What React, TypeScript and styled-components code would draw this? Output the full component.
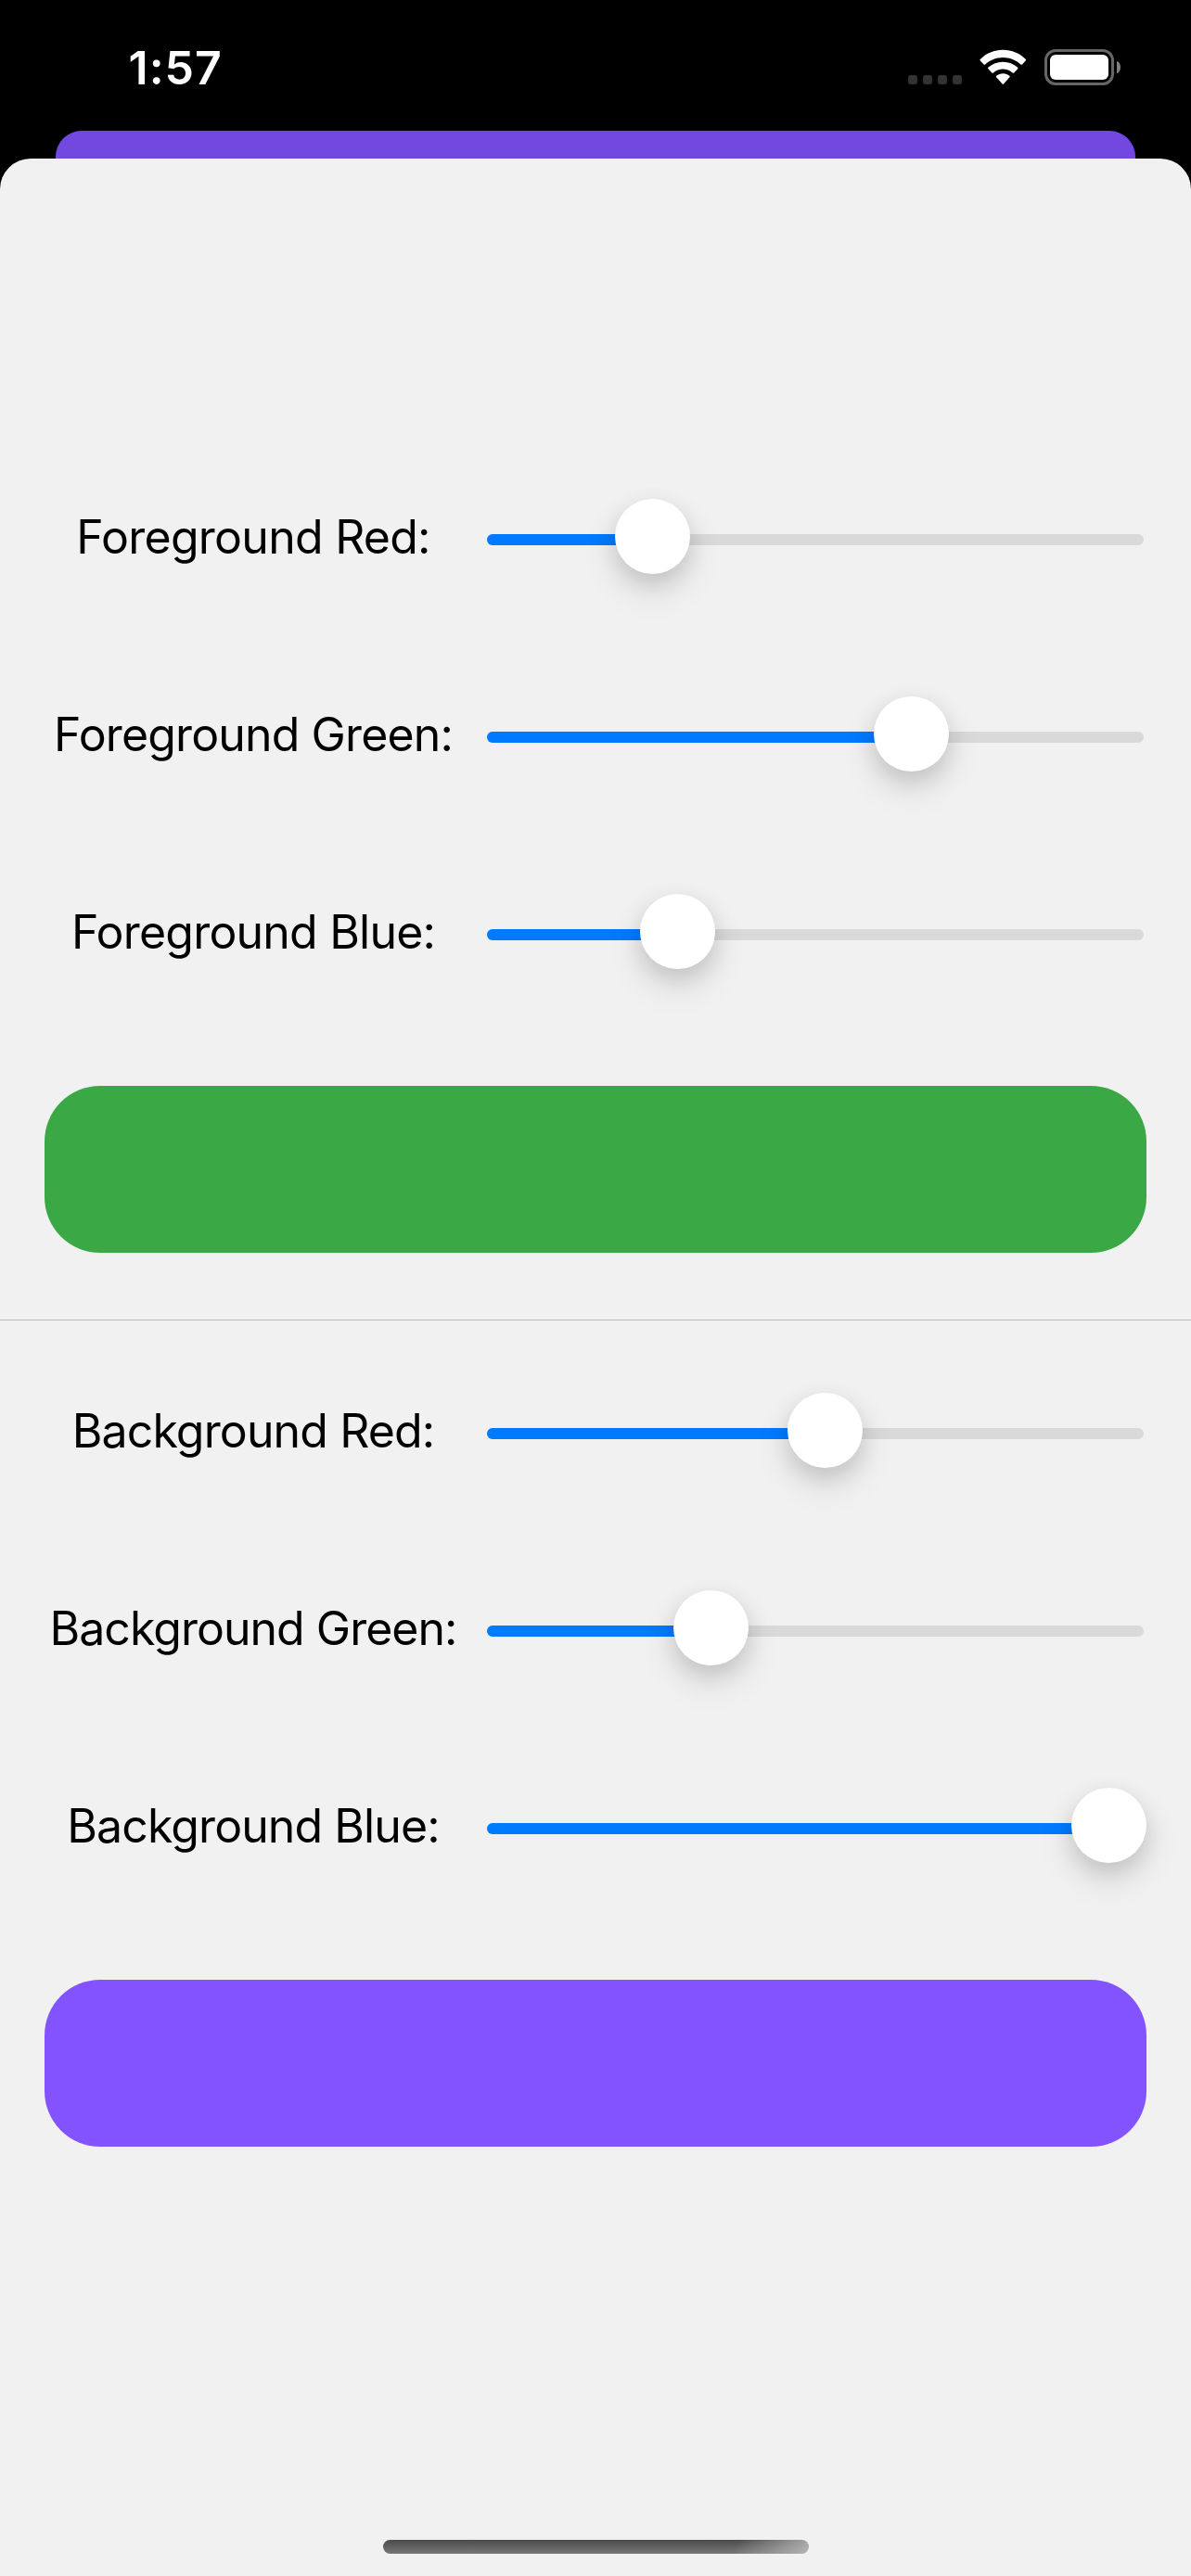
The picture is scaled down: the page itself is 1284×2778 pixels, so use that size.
import React from "react";
import styled, { createGlobalStyle } from "styled-components";

const GlobalStyle = createGlobalStyle`
  *, *::before, *::after { box-sizing: border-box; }
  body { margin: 0; background: #000; font-family: Inter, "Liberation Sans", sans-serif; }
`;

const Screen = styled.div`
  width: 1284px;
  height: 2778px;
  display: flex;
  flex-direction: column;
  overflow: hidden;
  background: #000;
`;

const StatusBar = styled.header`
  height: 141px;
  flex: none;
  display: flex;
  justify-content: space-between;
  padding: 42px 76px 0 138.5px;
`;

const Time = styled.time`
  color: #fff;
  font-size: 50px;
  font-weight: 600;
  line-height: 62px;
  letter-spacing: 1px;
`;

const StatusIcons = styled.div`
  display: flex;
  align-items: flex-start;
  padding-top: 10px;
`;

const Signal = styled.div`
  display: flex;
  gap: 6px;
  margin: 29px 19px 0 0;
`;

const SignalDot = styled.span`
  width: 10px;
  height: 10px;
  border-radius: 3px;
  background: #333;
`;

const WifiIcon = styled.svg`
  width: 52px;
  height: 40px;
  margin-right: 18px;
`;

const Battery = styled.div`
  display: flex;
  align-items: center;
  gap: 3px;
  margin-top: 1px;
`;

const BatteryBody = styled.div`
  width: 75px;
  height: 39px;
  padding: 3px;
  border: 3px solid #666;
  border-radius: 12px;
`;

const BatteryCharge = styled.div`
  height: 100%;
  border-radius: 6px;
  background: #fff;
`;

const BatteryCap = styled.span`
  width: 4px;
  height: 13px;
  border-radius: 0 4px 4px 0 / 0 6.5px 6.5px 0;
  background: #808080;
`;

const BackCard = styled.div`
  height: 30px;
  flex: none;
  margin: 0 60px;
  border-radius: 28px 28px 0 0;
  background: #7348e0;
`;

const Sheet = styled.main`
  flex: 1;
  display: flex;
  flex-direction: column;
  padding-top: 301px;
  border-radius: 33px 33px 0 0;
  background: #f1f1f1;
`;

const Group = styled.section`
  display: flex;
  flex-direction: column;
  padding: 0 48px;
`;

const Row = styled.div`
  height: 213px;
  display: grid;
  grid-template-columns: 450px 1fr;
  column-gap: 24px;
  align-items: center;
`;

const Label = styled.span<{ $spacing: number }>`
  text-align: center;
  white-space: nowrap;
  color: #000;
  font-size: 50px;
  line-height: 60px;
  letter-spacing: ${(p) => p.$spacing}px;
`;

const Slider = styled.div`
  display: flex;
  align-items: center;
  height: 81px;
  padding: 7px 3px 0;
`;

const Track = styled.div`
  position: relative;
  width: 100%;
  height: 12px;
  border-radius: 6px;
  background: #d9d9da;
`;

const Fill = styled.div`
  height: 100%;
  border-radius: 6px;
  background: #007aff;
`;

const Knob = styled.div`
  position: absolute;
  top: -38px;
  width: 81px;
  height: 81px;
  border-radius: 50%;
  background: #fff;
  box-shadow: 0 18px 39px rgba(0, 0, 0, 0.11), 0 9px 24px rgba(0, 0, 0, 0.12);
`;

const Swatch = styled.div<{ $color: string }>`
  height: 180px;
  margin-top: 60px;
  border-radius: 60px;
  background: ${(p) => p.$color};
`;

const Divider = styled.hr`
  width: 100%;
  height: 1px;
  margin: 72px 0 12px;
  border: 0;
  background: #bbbbbc;
`;

const HomeIndicator = styled.div`
  width: 459px;
  height: 15px;
  margin: auto auto 24px 413px;
  border-radius: 7.5px;
  background:
    linear-gradient(118deg, transparent 82%, rgba(190, 190, 190, 0.85) 100%),
    linear-gradient(#4b4b4b, #777);
`;

type Channel = { label: string; knob: number; spacing: number };

const foreground: Channel[] = [
  { label: "Foreground Red:", knob: 138, spacing: -0.74 },
  { label: "Foreground Green:", knob: 417, spacing: -0.87 },
  { label: "Foreground Blue:", knob: 165, spacing: -0.8 },
];

const background: Channel[] = [
  { label: "Background Red:", knob: 324, spacing: -0.87 },
  { label: "Background Green:", knob: 201, spacing: -0.98 },
  { label: "Background Blue:", knob: 630, spacing: -0.92 },
];

function ColorGroup({ channels, color }: { channels: Channel[]; color: string }) {
  return (
    <Group>
      {channels.map((c) => (
        <Row key={c.label}>
          <Label $spacing={c.spacing}>{c.label}</Label>
          <Slider>
            <Track>
              <Fill style={{ width: c.knob + 40 }} />
              <Knob style={{ left: c.knob }} />
            </Track>
          </Slider>
        </Row>
      ))}
      <Swatch $color={color} />
    </Group>
  );
}

export default function App() {
  return (
    <Screen>
      <GlobalStyle />
      <StatusBar>
        <Time>1:57</Time>
        <StatusIcons>
          <Signal>
            <SignalDot />
            <SignalDot />
            <SignalDot />
            <SignalDot />
          </Signal>
          <WifiIcon viewBox="0.7 0 52 40" fill="#fff">
            <path d="M1.3 13.2q-.5-.7.1-1.300C8 5.400 16.600 1.700 26 1.700s18 3.700 24.600 10.200q.6.600 0 1.300l-3.900 4.200q-.8.800-1.600 0C39.800 12.600 33.200 9.900 26 9.900S12.200 12.600 6.900 17.400q-.8.800-1.600 0z" />
            <path d="M10.100 22.200q-.8-.8 0-1.500C14.500 16.900 20 14.700 26 14.700s11.500 2.200 15.900 6q.8.700 0 1.500l-4 4.200q-.8.800-1.600 0C33.400 23.900 29.900 22.500 26 22.500s-7.400 1.400-10.300 3.900q-.8.800-1.600 0z" />
            <path d="M18.900 31.200q-.7-.8.1-1.500C20.900 28.200 23.300 27.300 26 27.300s5.100.9 7 2.400q.8.700.1 1.500l-6.400 7.300q-.7.700-1.400 0z" />
          </WifiIcon>
          <Battery>
            <BatteryBody>
              <BatteryCharge />
            </BatteryBody>
            <BatteryCap />
          </Battery>
        </StatusIcons>
      </StatusBar>
      <BackCard />
      <Sheet>
        <ColorGroup channels={foreground} color="#3aa945" />
        <Divider />
        <ColorGroup channels={background} color="#8253ff" />
        <HomeIndicator />
      </Sheet>
    </Screen>
  );
}
